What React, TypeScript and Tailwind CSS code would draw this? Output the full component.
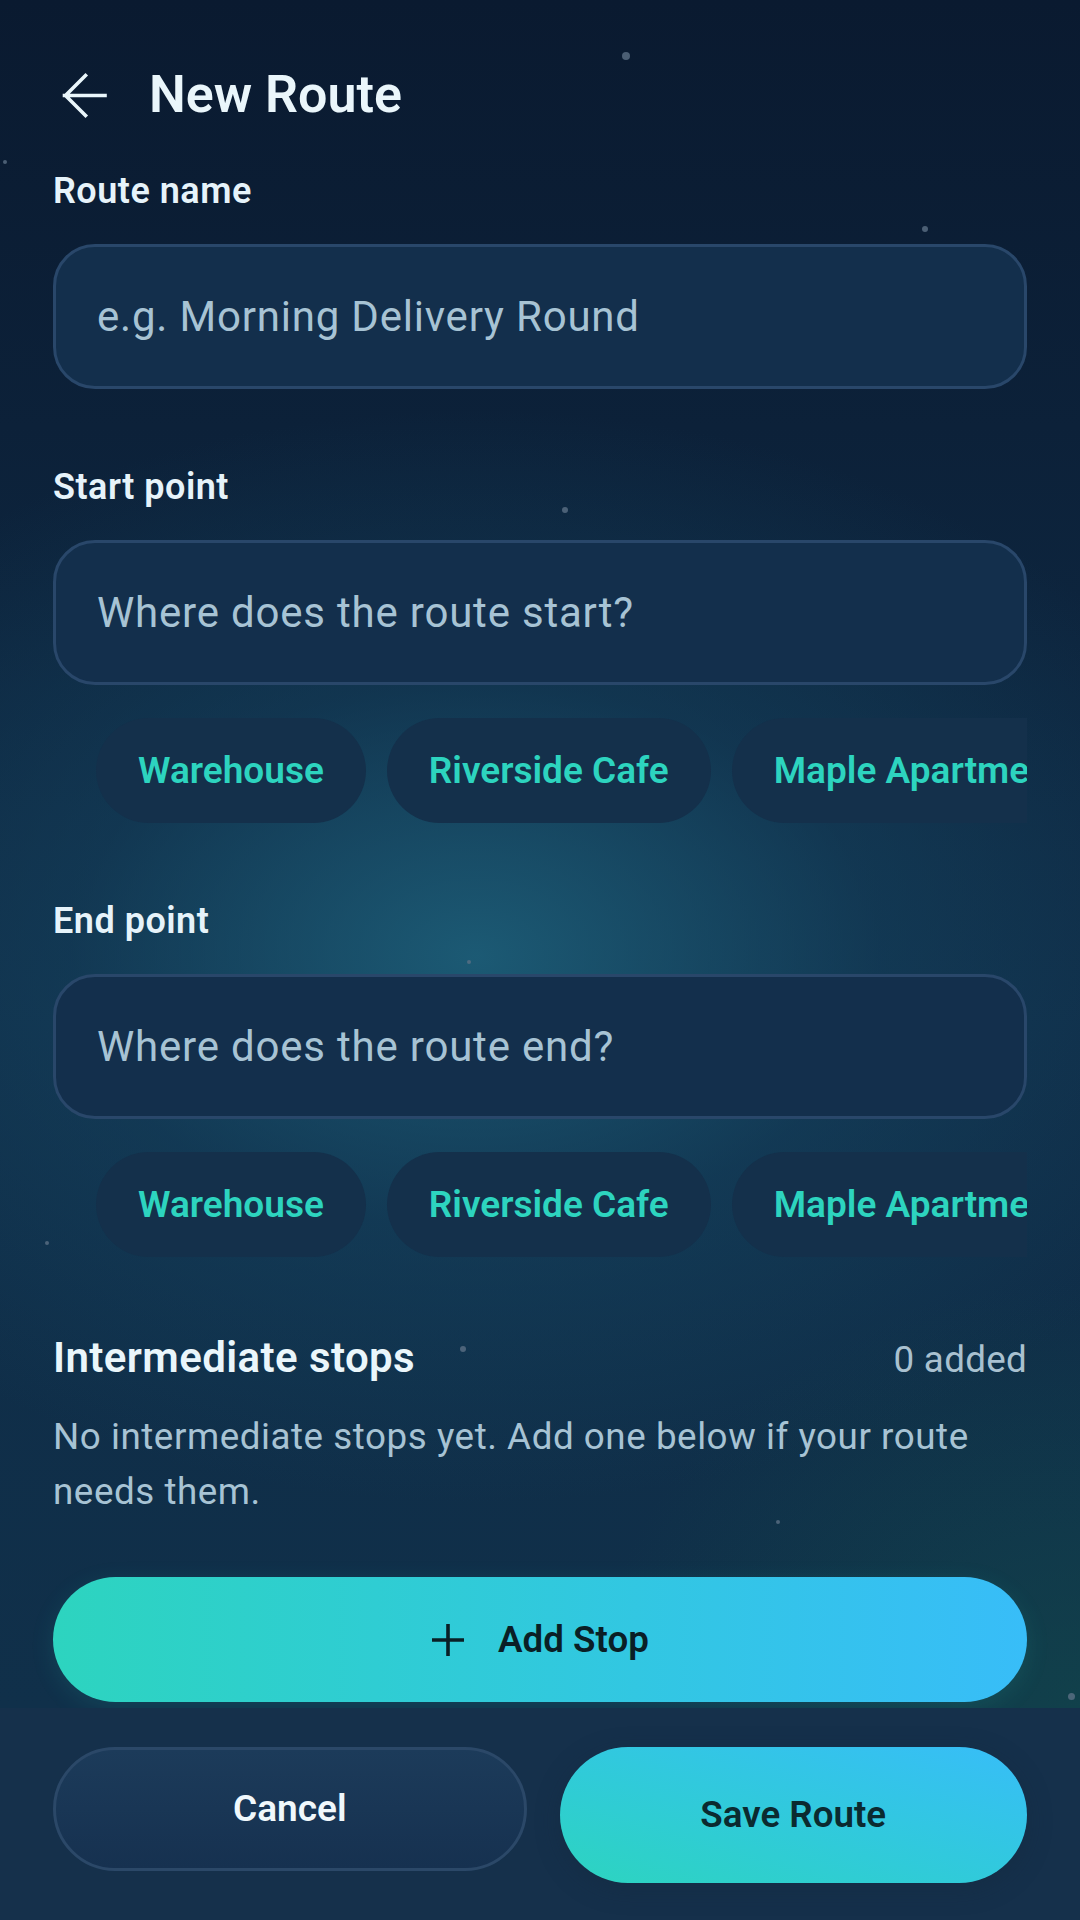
import type { ReactNode } from "react";

const places = ["Warehouse", "Riverside Cafe", "Maple Apartments", "Central Station"];

const stars = [
	{ x: 622, y: 52, s: 8 },
	{ x: 3, y: 160, s: 4 },
	{ x: 922, y: 226, s: 6 },
	{ x: 562, y: 507, s: 6 },
	{ x: 467, y: 960, s: 4 },
	{ x: 45, y: 1241, s: 4 },
	{ x: 460, y: 1346, s: 6 },
	{ x: 776, y: 1520, s: 4 },
	{ x: 1068, y: 1693, s: 7 },
];

function FieldLabel({ children }: { children: ReactNode }) {
	return (
		<label className="block text-[36px] leading-[40px] tracking-[0.5px] font-semibold text-[#e6f3fa]">
			{children}
		</label>
	);
}

function TextField({ placeholder }: { placeholder: string }) {
	return (
		<input
			type="text"
			placeholder={placeholder}
			className="mt-[33px] block h-[145px] w-full rounded-[42px] border-[3px] border-[#29476a] bg-[#132f4c] px-[41px] text-[42px] tracking-[0.8px] text-[#e6f3fa] outline-none placeholder:text-[#a7c3d4]"
		/>
	);
}

function QuickPicks() {
	return (
		<div className="mt-[33px] flex gap-[21px] overflow-hidden pl-[43px]">
			{places.map((place) => (
				<button
					key={place}
					type="button"
					className="flex h-[105px] flex-none items-center rounded-full bg-[#14304b] px-[42px] text-[37px] font-semibold text-[#2dd4bf]"
				>
					{place}
				</button>
			))}
		</div>
	);
}

export default function App() {
	return (
		<div className="flex h-[1920px] w-[1080px] flex-col overflow-hidden bg-[#0c1f37] font-['Roboto','Liberation_Sans',sans-serif]">
			<main className="relative flex-1 overflow-hidden bg-[radial-gradient(ellipse_75%_32%_at_44%_56%,rgba(30,98,124,0.85)_0%,rgba(22,72,100,0.45)_50%,transparent_100%),radial-gradient(ellipse_45%_25%_at_100%_100%,rgba(18,78,76,0.55),transparent),linear-gradient(180deg,#0a1a30_0%,#0c2139_25%,#0f2c47_60%,#10304a_100%)] px-[53px]">
				{stars.map((star) => (
					<span
						key={`${star.x}-${star.y}`}
						className="absolute rounded-full bg-[#5b6f84]/80"
						style={{ left: star.x, top: star.y, width: star.s, height: star.s }}
					/>
				))}

				<div className="relative">
					<header className="mt-[64px] flex h-[62px] items-center">
						<svg width="63" height="63" viewBox="0 0 63 63" fill="none" className="flex-none">
							<path
								d="M52 31.5H11.5M32.5 11.5L12.5 31.5L32.5 51.5"
								stroke="#eaf6fb"
								strokeWidth="3.6"
								strokeLinecap="square"
							/>
						</svg>
						<h1 className="ml-[33px] text-[52px] font-semibold text-[#eaf6fb]">New Route</h1>
					</header>

					<section className="mt-[45px]">
						<FieldLabel>Route name</FieldLabel>
						<TextField placeholder="e.g. Morning Delivery Round" />
					</section>

					<section className="mt-[78px]">
						<FieldLabel>Start point</FieldLabel>
						<TextField placeholder="Where does the route start?" />
						<QuickPicks />
					</section>

					<section className="mt-[78px]">
						<FieldLabel>End point</FieldLabel>
						<TextField placeholder="Where does the route end?" />
						<QuickPicks />
					</section>

					<section className="mt-[75px]">
						<div className="flex items-baseline justify-between">
							<h2 className="text-[42px] leading-[47px] tracking-[0.4px] font-semibold text-[#eaf6fb]">
								Intermediate stops
							</h2>
							<span className="text-[36.75px] tracking-[0.3px] text-[#a9c1d0]">0 added</span>
						</div>
						<p className="mt-[22px] text-[36.75px] leading-[55px] tracking-[0.55px] text-[#a7c3d4]">
							No intermediate stops yet. Add one below if your route needs them.
						</p>
					</section>

					<button
						type="button"
						className="mt-[58px] flex h-[125px] w-full items-center justify-center gap-[33px] rounded-full bg-linear-to-r from-[#2dd4bf] to-[#38bdf8] shadow-[0_6px_24px_rgba(45,212,191,0.12)]"
					>
						<svg width="34" height="34" viewBox="0 0 34 34" fill="none">
							<path d="M17 1V33M1 17H33" stroke="#0a1f26" strokeWidth="3.6" />
						</svg>
						<span className="text-[36.75px] font-semibold text-[#0a1f26]">Add Stop</span>
					</button>
				</div>
			</main>

			<footer className="flex h-[212px] flex-none items-start gap-[33px] bg-[#15304b] px-[53px] pt-[39px]">
				<button
					type="button"
					className="h-[124px] w-0 flex-1 rounded-full border-[3px] border-[#2b4868] bg-linear-to-b from-[#1c3b5a] to-[#163150] text-[37px] font-semibold text-[#f0f8fc]"
				>
					Cancel
				</button>
				<button
					type="button"
					className="h-[136px] w-0 flex-1 rounded-full bg-linear-to-tr from-[#2dd4bf] to-[#38bdf8] text-[36.75px] font-semibold text-[#0b2a30] shadow-[0_6px_24px_rgba(20,40,60,0.35)]"
				>
					Save Route
				</button>
			</footer>
		</div>
	);
}
